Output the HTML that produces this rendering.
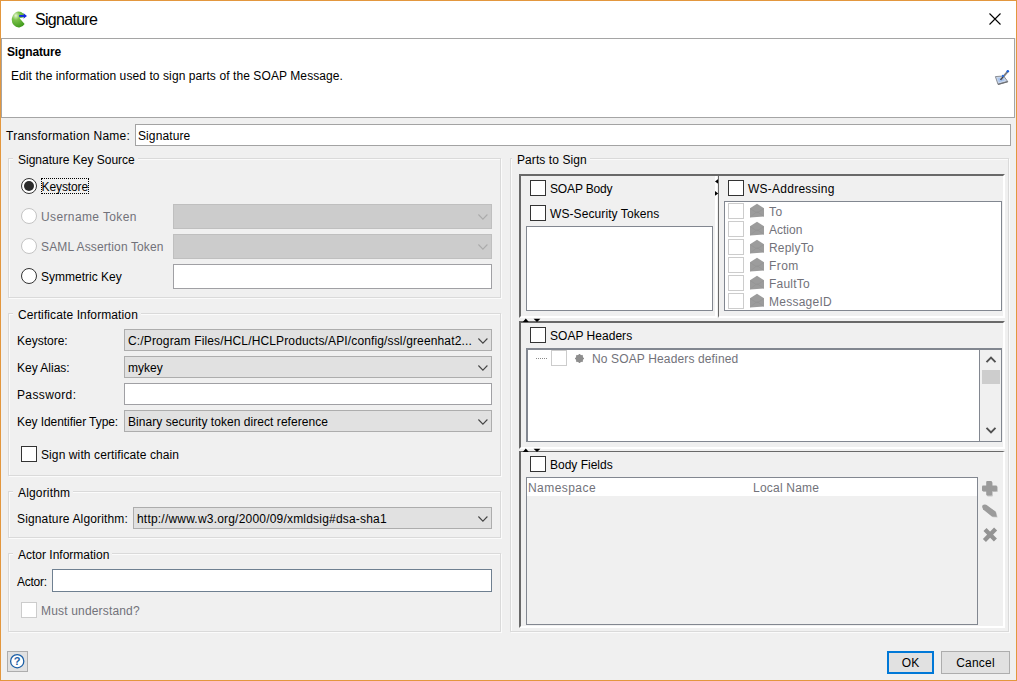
<!DOCTYPE html>
<html>
<head>
<meta charset="utf-8">
<title>Signature</title>
<style>
html,body{margin:0;padding:0;}
body{width:1017px;height:681px;position:relative;overflow:hidden;background:#f0f0f0;
 font-family:"Liberation Sans",Arial,sans-serif;font-size:12px;color:#000;}
div,span{box-sizing:border-box;}
.a{position:absolute;}
.t{position:absolute;white-space:nowrap;line-height:14px;height:14px;}
.dis{color:#72727a;}
/* window border */
#wb{position:absolute;left:0;top:0;width:1017px;height:681px;border:1px solid #e3973e;pointer-events:none;z-index:50;}
/* group box */
.grp{position:absolute;border:1px solid #dadada;box-shadow:1px 1px 0 #fbfbfb, inset 1px 1px 0 #fbfbfb;}
.gt{position:absolute;background:#f0f0f0;padding:0 3px 0 5px;white-space:nowrap;line-height:14px;height:14px;}
/* inputs */
.inp{position:absolute;background:#fff;border:1px solid #a0a0a4;}
.cmb{position:absolute;background:#e1e1e1;border:1px solid #adadad;}
.cmbd{position:absolute;background:#cccccc;border:1px solid #bfbfbf;}
.chev{position:absolute;right:3px;top:8px;width:11px;height:7px;}
/* checkbox & radio */
.cb{position:absolute;width:16px;height:16px;background:#fff;border:1px solid #333;}
.cbd{position:absolute;width:16px;height:16px;background:#fff;border:1px solid #cccccc;}
.rb{position:absolute;width:16px;height:16px;border-radius:50%;background:#fff;border:1px solid #333;}
.rbd{position:absolute;width:16px;height:16px;border-radius:50%;background:#fff;border:1px solid #c4c4c4;}
.btn{position:absolute;background:#e1e1e1;border:1px solid #adadad;text-align:center;line-height:21px;}
</style>
</head>
<body>
<!-- title bar -->
<div class="a" style="left:0;top:0;width:1017px;height:38px;background:#fff;"></div>
<svg class="a" style="left:11px;top:10px" width="17" height="18" viewBox="0 0 17 18">
 <defs><radialGradient id="gb" cx="0.3" cy="0.25" r="0.8"><stop offset="0" stop-color="#e4f5cf"/><stop offset="0.35" stop-color="#7cc24a"/><stop offset="1" stop-color="#3f9a1c"/></radialGradient></defs>
 <path d="M14.4 7 L8.6 8.2 L13.6 14 A7 8 0 1 1 14.4 7Z" fill="url(#gb)"/>
 <path d="M8.2 5.95 H14" stroke="#1528e0" stroke-width="1.9" fill="none"/>
 <path d="M12.3 3.1 L16 5.95 L12.3 8.8 L13.4 5.95 Z" fill="#1528e0"/>
</svg>
<div class="t" id="ttl" style="left:35px;top:10px;font-size:16px;line-height:20px;height:20px;letter-spacing:-0.7px;">Signature</div>
<svg class="a" style="left:988px;top:12px" width="14" height="14" viewBox="0 0 14 14"><path d="M1.5 1.5 L12.5 12.5 M12.5 1.5 L1.5 12.5" stroke="#000" stroke-width="1.1" fill="none"/></svg>

<!-- header panel -->
<div class="a" style="left:1px;top:38px;width:1014px;height:80px;background:#fff;border:1px solid #a5a5a5;"></div>
<div class="t" style="left:7px;top:45px;font-weight:bold;letter-spacing:-0.15px;">Signature</div>
<div class="t" id="edit" style="left:11px;top:69px;letter-spacing:0.09px;">Edit the information used to sign parts of the SOAP Message.</div>
<svg class="a" style="left:994px;top:69px" width="17" height="17" viewBox="0 0 17 17">
 <path d="M1.4 7.6 L9.6 7 L13.8 12.6 L4 15.4 Z" fill="#c9d6ea" stroke="#8b8f96" stroke-width="1"/>
 <path d="M3.4 9.2 L8.8 8.8 L10.6 11.6 L5 13.2 Z" fill="#a9c4ee"/>
 <path d="M4 15.4 L13.8 12.6" stroke="#6f7175" stroke-width="1.2"/>
 <path d="M6.6 10.8 L13.6 2.6" stroke="#7a7d84" stroke-width="1.9"/>
 <path d="M6.4 11 L9.4 7.4" stroke="#3a3f4a" stroke-width="1"/>
 <circle cx="8.9" cy="6.9" r="1.1" fill="#2a6fe0"/>
 <circle cx="13.8" cy="2.3" r="1.25" fill="#1f62d8"/>
</svg>

<!-- transformation name -->
<div class="t" id="tn" style="left:6px;top:129px;letter-spacing:0.26px;">Transformation Name:</div>
<div class="inp" style="left:135px;top:124px;width:876px;height:22px;border-color:#a3a3a3;"></div>
<div class="t" style="left:138px;top:129px;letter-spacing:0.1px;">Signature</div>

<!-- Signature Key Source -->
<div class="grp" style="left:8px;top:158px;width:493px;height:140px;"></div>
<div class="gt" style="left:13px;top:153px;">Signature Key Source</div>
<div class="rb" style="left:21px;top:178px;"><div class="a" style="left:2px;top:2px;width:10px;height:10px;border-radius:50%;background:#2b2b2b;"></div></div>
<div class="a" style="left:41px;top:178px;width:48px;height:16px;border:1px dotted #000;"></div>
<div class="t" style="left:41.5px;top:180px;letter-spacing:-0.1px;">Keystore</div>
<div class="rbd" style="left:21px;top:208px;"></div>
<div class="t dis" style="left:41px;top:210px;letter-spacing:0.38px;">Username Token</div>
<div class="cmbd" style="left:173px;top:204px;width:319px;height:25px;"><svg class="chev" style="top:9px" viewBox="0 0 11 7"><path d="M1.4 0.5 L5.9 5.1 L10.4 0.5" stroke="#ababab" stroke-width="1.1" fill="none"/></svg></div>
<div class="rbd" style="left:21px;top:238px;"></div>
<div class="t dis" style="left:41px;top:240px;letter-spacing:0.125px;">SAML Assertion Token</div>
<div class="cmbd" style="left:173px;top:234px;width:319px;height:25px;"><svg class="chev" style="top:9px" viewBox="0 0 11 7"><path d="M1.4 0.5 L5.9 5.1 L10.4 0.5" stroke="#ababab" stroke-width="1.1" fill="none"/></svg></div>
<div class="rb" style="left:21px;top:268px;"></div>
<div class="t" style="left:41px;top:270px;">Symmetric Key</div>
<div class="inp" style="left:173px;top:264px;width:319px;height:25px;"></div>

<!-- Certificate Information -->
<div class="grp" style="left:8px;top:313px;width:493px;height:163px;"></div>
<div class="gt" style="left:13px;top:308px;letter-spacing:0.11px;">Certificate Information</div>
<div class="t" style="left:17px;top:334px;">Keystore:</div>
<div class="cmb" style="left:124px;top:329px;width:368px;height:22px;"><svg class="chev" viewBox="0 0 11 7"><path d="M1.4 0.5 L5.9 5.1 L10.4 0.5" stroke="#444" stroke-width="1.1" fill="none"/></svg></div>
<div class="t" id="ks" style="left:128px;top:334px;letter-spacing:0.14px;">C:/Program Files/HCL/HCLProducts/API/config/ssl/greenhat2...</div>
<div class="t" style="left:17px;top:361px;">Key Alias:</div>
<div class="cmb" style="left:124px;top:356px;width:368px;height:22px;"><svg class="chev" viewBox="0 0 11 7"><path d="M1.4 0.5 L5.9 5.1 L10.4 0.5" stroke="#444" stroke-width="1.1" fill="none"/></svg></div>
<div class="t" style="left:128px;top:361px;">mykey</div>
<div class="t" style="left:17px;top:388px;letter-spacing:0.37px;">Password:</div>
<div class="inp" style="left:124px;top:383px;width:368px;height:22px;"></div>
<div class="t" style="left:17px;top:415px;letter-spacing:-0.07px;">Key Identifier Type:</div>
<div class="cmb" style="left:124px;top:410px;width:368px;height:22px;"><svg class="chev" viewBox="0 0 11 7"><path d="M1.4 0.5 L5.9 5.1 L10.4 0.5" stroke="#444" stroke-width="1.1" fill="none"/></svg></div>
<div class="t" style="left:128px;top:415px;letter-spacing:0.05px;">Binary security token direct reference</div>
<div class="cb" style="left:21px;top:446px;"></div>
<div class="t" style="left:41px;top:448px;letter-spacing:0.1px;">Sign with certificate chain</div>

<!-- Algorithm -->
<div class="grp" style="left:8px;top:491px;width:493px;height:47px;"></div>
<div class="gt" style="left:13px;top:486px;letter-spacing:0.17px;">Algorithm</div>
<div class="t" style="left:17px;top:512px;letter-spacing:0.14px;">Signature Algorithm:</div>
<div class="cmb" style="left:133px;top:507px;width:359px;height:22px;"><svg class="chev" viewBox="0 0 11 7"><path d="M1.4 0.5 L5.9 5.1 L10.4 0.5" stroke="#444" stroke-width="1.1" fill="none"/></svg></div>
<div class="t" id="alg" style="left:137px;top:512px;letter-spacing:0.2px;">http://www.w3.org/2000/09/xmldsig#dsa-sha1</div>

<!-- Actor Information -->
<div class="grp" style="left:8px;top:553px;width:493px;height:79px;"></div>
<div class="gt" style="left:13px;top:548px;">Actor Information</div>
<div class="t" style="left:17px;top:575px;letter-spacing:-0.25px;">Actor:</div>
<div class="inp" style="left:52px;top:569px;width:440px;height:23px;border-color:#6f8091;"></div>
<div class="cbd" style="left:21px;top:602px;"></div>
<div class="t dis" style="left:41px;top:604px;letter-spacing:0.17px;">Must understand?</div>

<!-- Parts to Sign -->
<div class="grp" style="left:510px;top:158px;width:499px;height:474px;"></div>
<div class="gt" style="left:512px;top:153px;letter-spacing:0.08px;">Parts to Sign</div>


<!-- split panes -->
<style>
.bev{position:absolute;border-style:solid;border-width:2px;border-color:#696969 #fff #fff #696969;}
.sp{position:absolute;background:#fff;border:1px solid #828790;}
.row{position:absolute;left:0;height:18px;width:100%;}
</style>
<!-- section 1 left -->
<div class="bev" style="left:519px;top:174px;width:198px;height:144px;"></div><div class="a" style="left:519px;top:174px;width:484px;height:2px;background:#696969;z-index:3;"></div>
<div class="cb" style="left:530px;top:180px;"></div>
<div class="t" style="left:550px;top:182px;letter-spacing:-0.15px;">SOAP Body</div>
<div class="cb" style="left:530px;top:205px;"></div>
<div class="t" style="left:550px;top:207px;letter-spacing:0.09px;">WS-Security Tokens</div>
<div class="sp" style="left:526px;top:226px;width:187px;height:85px;"></div>
<!-- divider arrows -->
<svg class="a" style="left:714px;top:176px" width="5" height="22" viewBox="0 0 5 22"><path d="M4.2 3 L1 5.4 L4.2 7.8Z M1 15 L4.2 17.4 L1 19.8Z" fill="#000"/></svg>
<!-- section 1 right -->
<div class="bev" style="left:718px;top:174px;width:287px;height:144px;border-left-width:1px;"></div>
<div class="cb" style="left:728px;top:180px;"></div>
<div class="t" style="left:748px;top:182px;letter-spacing:0.25px;">WS-Addressing</div>
<div class="sp" style="left:724px;top:201px;width:278px;height:110px;">
</div>
<div class="cbd" style="left:728px;top:203px;"></div><svg class="a" style="left:749px;top:203px" width="16" height="15" viewBox="0 0 16 15"><path d="M1 5.2 L8 0.8 L15 5.2 L15 13.6 L1 14.4Z" fill="#9c9c9c"/><path d="M1.5 13.8 L8 8.6 L14.5 13.2 M1.5 5.8 L8 10 L14.5 5.8" stroke="#939393" stroke-width="0.7" fill="none"/></svg><div class="t dis" style="left:769px;top:205px;letter-spacing:0.5px;">To</div>
<div class="cbd" style="left:728px;top:221px;"></div><svg class="a" style="left:749px;top:221px" width="16" height="15" viewBox="0 0 16 15"><path d="M1 5.2 L8 0.8 L15 5.2 L15 13.6 L1 14.4Z" fill="#9c9c9c"/><path d="M1.5 13.8 L8 8.6 L14.5 13.2 M1.5 5.8 L8 10 L14.5 5.8" stroke="#939393" stroke-width="0.7" fill="none"/></svg><div class="t dis" style="left:769px;top:223px;">Action</div>
<div class="cbd" style="left:728px;top:239px;"></div><svg class="a" style="left:749px;top:239px" width="16" height="15" viewBox="0 0 16 15"><path d="M1 5.2 L8 0.8 L15 5.2 L15 13.6 L1 14.4Z" fill="#9c9c9c"/><path d="M1.5 13.8 L8 8.6 L14.5 13.2 M1.5 5.8 L8 10 L14.5 5.8" stroke="#939393" stroke-width="0.7" fill="none"/></svg><div class="t dis" style="left:769px;top:241px;letter-spacing:0.2px;">ReplyTo</div>
<div class="cbd" style="left:728px;top:257px;"></div><svg class="a" style="left:749px;top:257px" width="16" height="15" viewBox="0 0 16 15"><path d="M1 5.2 L8 0.8 L15 5.2 L15 13.6 L1 14.4Z" fill="#9c9c9c"/><path d="M1.5 13.8 L8 8.6 L14.5 13.2 M1.5 5.8 L8 10 L14.5 5.8" stroke="#939393" stroke-width="0.7" fill="none"/></svg><div class="t dis" style="left:769px;top:259px;letter-spacing:0.4px;">From</div>
<div class="cbd" style="left:728px;top:275px;"></div><svg class="a" style="left:749px;top:275px" width="16" height="15" viewBox="0 0 16 15"><path d="M1 5.2 L8 0.8 L15 5.2 L15 13.6 L1 14.4Z" fill="#9c9c9c"/><path d="M1.5 13.8 L8 8.6 L14.5 13.2 M1.5 5.8 L8 10 L14.5 5.8" stroke="#939393" stroke-width="0.7" fill="none"/></svg><div class="t dis" style="left:769px;top:277px;letter-spacing:0.2px;">FaultTo</div>
<div class="cbd" style="left:728px;top:293px;"></div><svg class="a" style="left:749px;top:293px" width="16" height="15" viewBox="0 0 16 15"><path d="M1 5.2 L8 0.8 L15 5.2 L15 13.6 L1 14.4Z" fill="#9c9c9c"/><path d="M1.5 13.8 L8 8.6 L14.5 13.2 M1.5 5.8 L8 10 L14.5 5.8" stroke="#939393" stroke-width="0.7" fill="none"/></svg><div class="t dis" style="left:769px;top:295px;letter-spacing:0.25px;">MessageID</div>
<!-- section 2 -->
<svg class="a" style="left:522px;top:318px;z-index:5" width="20" height="4" viewBox="0 0 20 4"><path d="M0.8 4 L3.8 0.6 L6.8 4Z M11.6 0.8 L18.4 0.8 L15 4Z" fill="#000"/></svg>
<div class="bev" style="left:519px;top:321px;width:486px;height:128px;"></div>
<div class="cb" style="left:530px;top:327px;"></div>
<div class="t" style="left:550px;top:329px;letter-spacing:0.03px;">SOAP Headers</div>
<div class="sp" style="left:526px;top:348px;width:476px;height:94px;border-width:2px 1px 1px 2px;"></div>
<div class="a" style="left:536px;top:358px;width:12px;height:1px;background-image:linear-gradient(90deg,#8a8a8a 50%,transparent 50%);background-size:2px 1px;"></div>
<div class="cbd" style="left:551px;top:350px;"></div>
<svg class="a" style="left:574px;top:353px" width="11" height="11" viewBox="0 0 11 11"><circle cx="5.5" cy="5.5" r="3.7" fill="#8e8e8e"/><path d="M5.5 1V10M1 5.5H10M2.4 2.4L8.6 8.6M8.6 2.4L2.4 8.6" stroke="#8e8e8e" stroke-width="1.6"/></svg>
<div class="t dis" style="left:592px;top:352px;letter-spacing:0.135px;">No SOAP Headers defined</div>
<div class="a" style="left:979px;top:350px;width:22px;height:91px;background:#f0f0f0;border-left:1px solid #828790;"></div>
<div class="a" style="left:982px;top:370px;width:18px;height:14px;background:#cdcdcd;"></div>
<svg class="a" style="left:985px;top:355px" width="12" height="9" viewBox="0 0 12 9"><path d="M1.5 7.2 L6 2.6 L10.5 7.2" stroke="#505050" stroke-width="1.9" fill="none"/></svg>
<svg class="a" style="left:985px;top:426px" width="12" height="9" viewBox="0 0 12 9"><path d="M1.5 1.8 L6 6.4 L10.5 1.8" stroke="#505050" stroke-width="1.9" fill="none"/></svg>
<div class="a" style="left:519px;top:321px;width:484px;height:2px;background:#696969;z-index:3;"></div>
<!-- section 3 -->
<svg class="a" style="left:522px;top:448px;z-index:5" width="20" height="4" viewBox="0 0 20 4"><path d="M0.8 4 L3.8 0.6 L6.8 4Z M11.6 0.8 L18.4 0.8 L15 4Z" fill="#000"/></svg>
<div class="bev" style="left:519px;top:451px;width:486px;height:177px;border-top-width:1px;"></div>
<div class="cb" style="left:530px;top:456px;"></div>
<div class="t" style="left:550px;top:458px;">Body Fields</div>
<div class="sp" style="left:526px;top:477px;width:452px;height:148px;background:#f0f0f0;"><div class="a" style="left:0;top:0;width:450px;height:18px;background:#fff;"></div></div>
<div class="t dis" style="left:528px;top:481px;letter-spacing:0.44px;">Namespace</div>
<div class="t dis" style="left:753px;top:481px;letter-spacing:0.22px;">Local Name</div>

<svg class="a" style="left:981px;top:480px" width="18" height="18" viewBox="0 0 18 18"><g fill="#c6c6c6" transform="translate(0.9,0.9)"><rect x="5.2" y="1" width="5.8" height="14.6" rx="1"/><rect x="1" y="5.4" width="15" height="5.8" rx="1"/></g><g fill="#9b9b9b"><rect x="5.2" y="1" width="5.8" height="14.6" rx="1"/><rect x="1" y="5.4" width="15" height="5.8" rx="1"/></g></svg>
<svg class="a" style="left:981px;top:503px" width="18" height="17" viewBox="0 0 18 17"><path d="M1.3 4.2 Q0.6 1.6 3.6 1.6 L5.2 1.8 L14.6 8.6 L15.8 13.8 L11 13.4 L2 6.2Z" fill="#c9c9c9" transform="translate(0.8,0.8)"/><path d="M1.3 4.2 Q0.6 1.6 3.6 1.6 L5.2 1.8 L14.6 8.6 L15.8 13.8 L11 13.4 L2 6.2Z" fill="#9b9b9b"/></svg>
<svg class="a" style="left:982px;top:527px" width="17" height="17" viewBox="0 0 17 17"><path d="M3 2.6 L13.4 13 M13.6 2 L2.4 13.4" stroke="#939393" stroke-width="4.3" fill="none"/></svg>
<!-- bottom -->
<div class="a" style="left:7px;top:651px;width:21px;height:21px;background:#e1e1e1;border:1px solid #adadad;"></div>
<svg class="a" style="left:9px;top:653px" width="17" height="17" viewBox="0 0 17 17"><circle cx="8.2" cy="8.2" r="6.6" fill="#fff" stroke="#1b5fa6" stroke-width="1.3"/><text x="8.2" y="12.2" text-anchor="middle" font-family="Liberation Sans" font-weight="bold" font-size="11" fill="#1b5fa6">?</text></svg>
<div class="btn" style="left:887px;top:651px;width:47px;height:23px;border:2px solid #0078d7;line-height:20px;">OK</div>
<div class="btn" style="left:941px;top:651px;width:69px;height:23px;line-height:22px;letter-spacing:0.2px;">Cancel</div>

<div id="wb"></div>
</body>
</html>
